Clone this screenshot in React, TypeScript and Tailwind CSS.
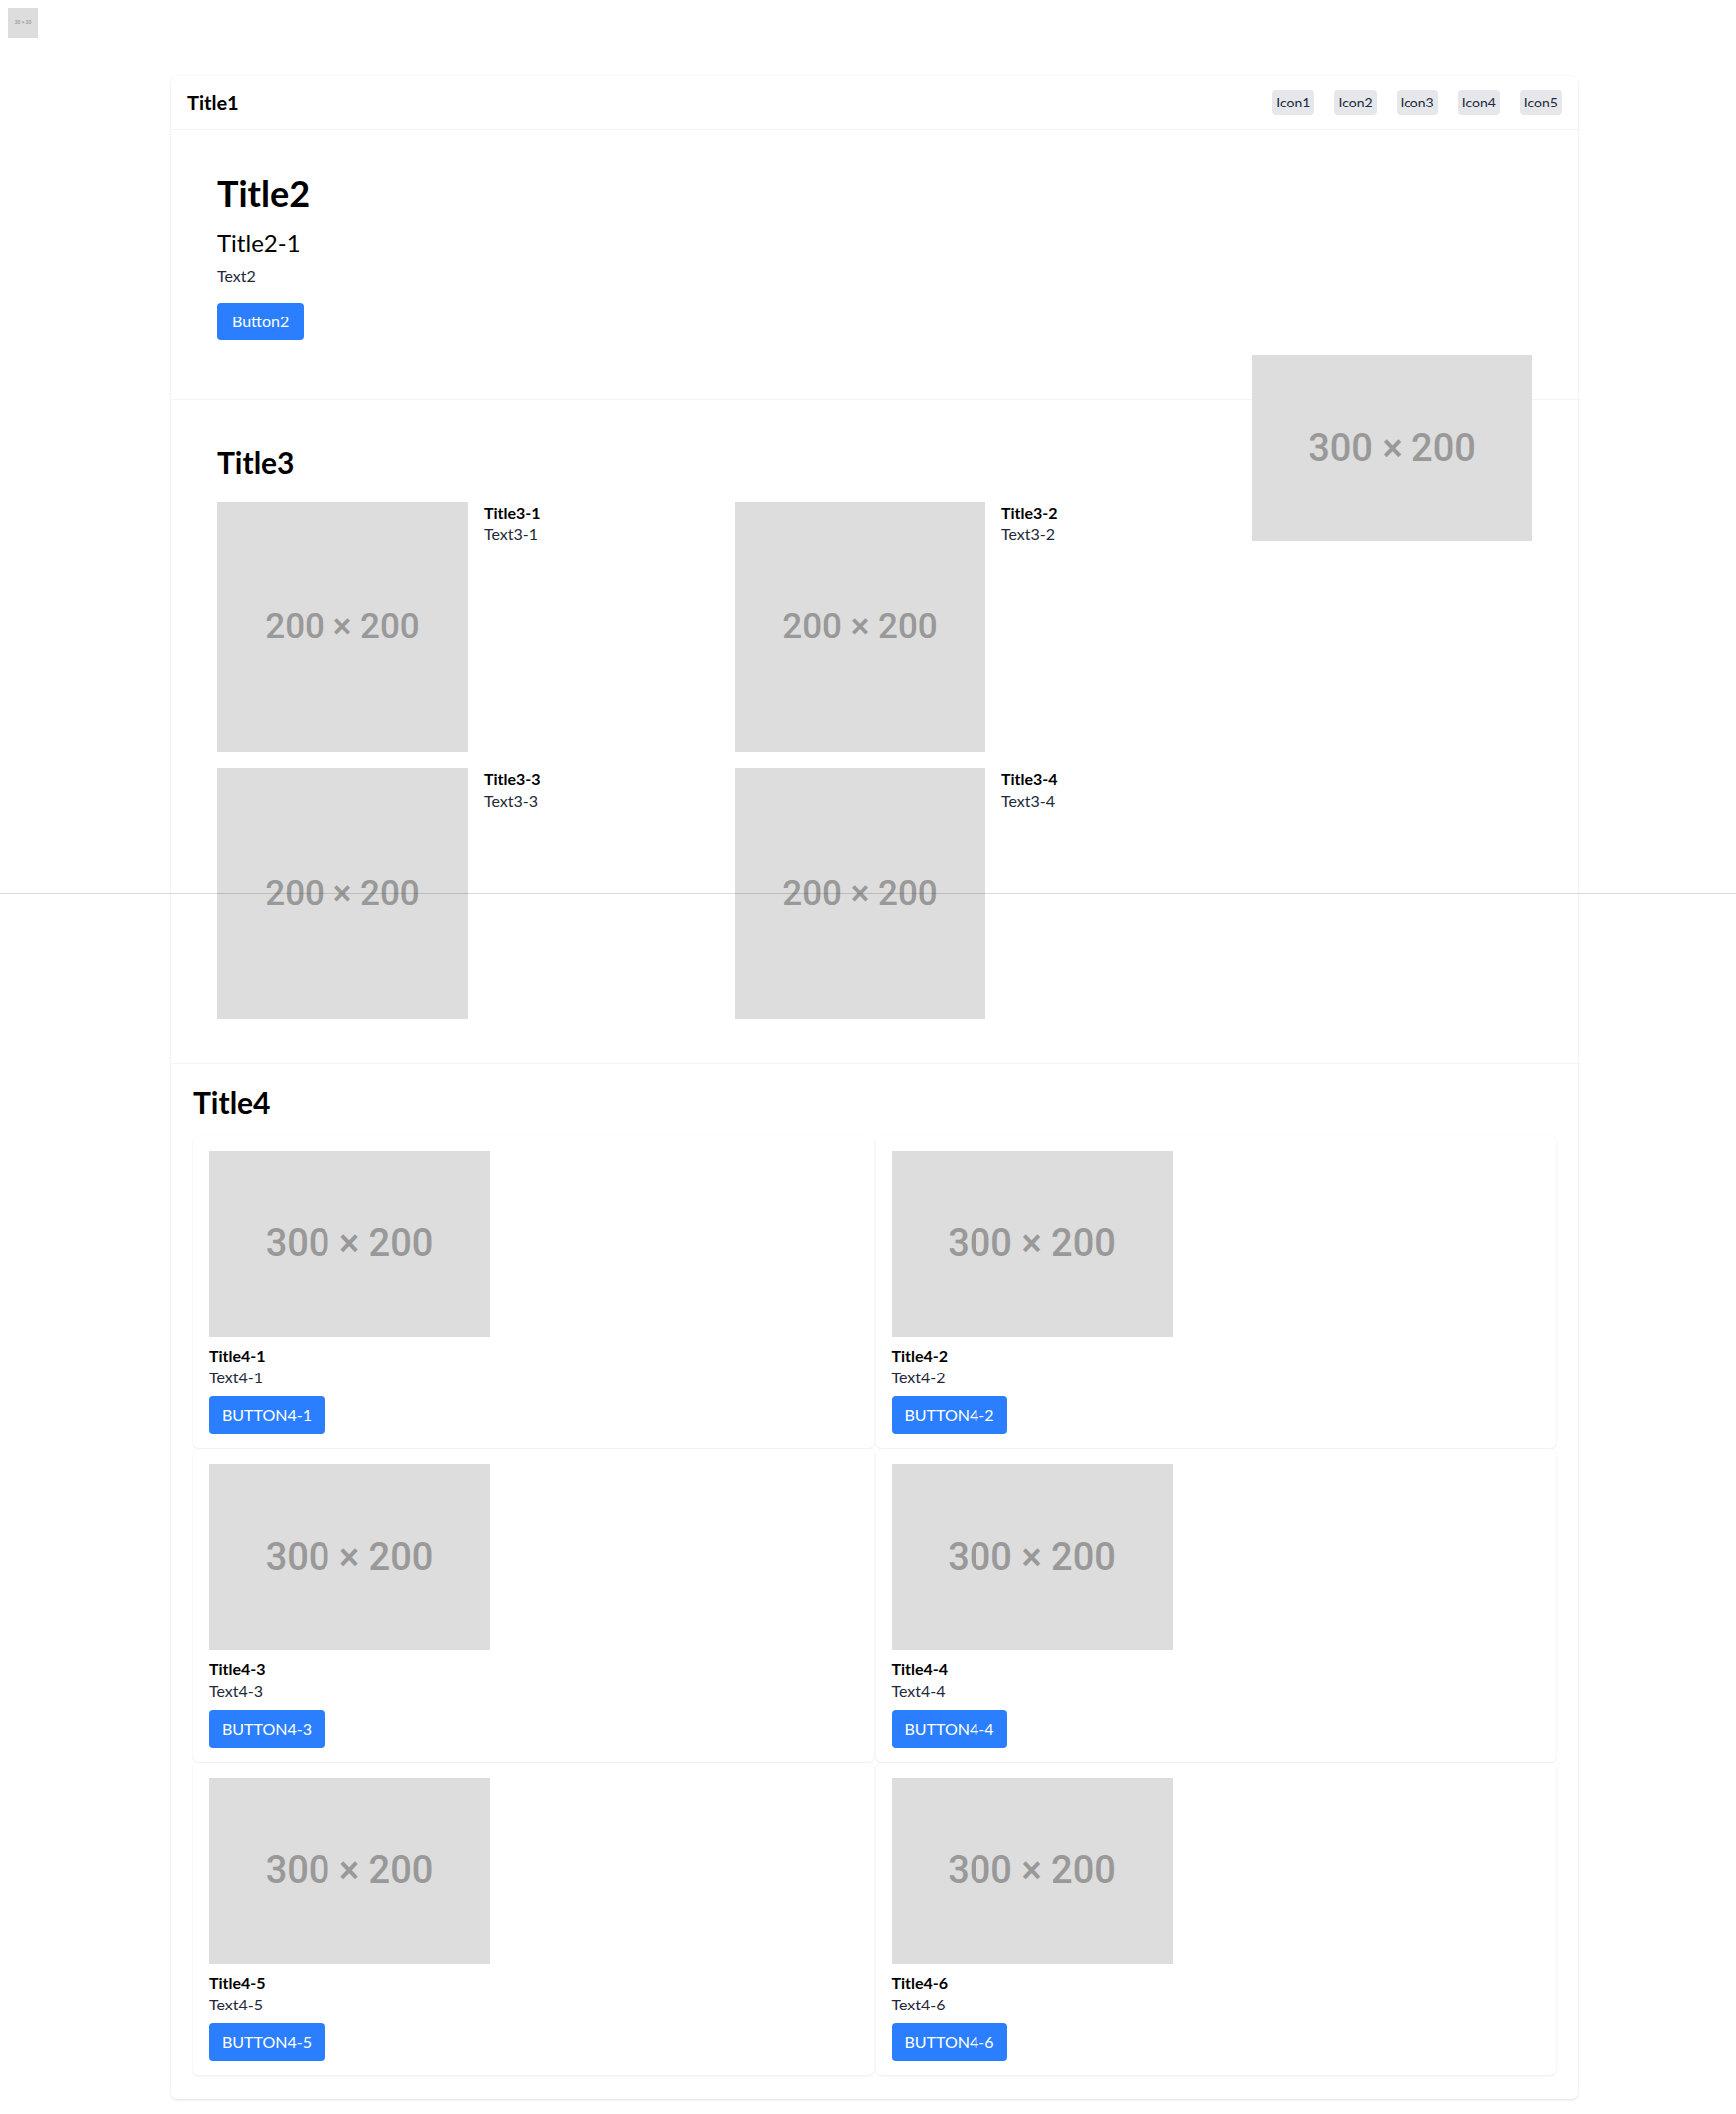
import React from 'react'

const icons = ['Icon1', 'Icon2', 'Icon3', 'Icon4', 'Icon5']
const features = ['3-1', '3-2', '3-3', '3-4']
const cards = ['4-1', '4-2', '4-3', '4-4', '4-5', '4-6']

function Placeholder({ className, label }: { className: string; label: string }) {
  return (
    <div
      className={`flex shrink-0 items-center justify-center bg-[#dddddd] font-['Roboto','Liberation_Sans',sans-serif] font-medium text-[#999999] ${className}`}
    >
      {label}
    </div>
  )
}

export default function App() {
  return (
    <div className="relative min-h-screen bg-white p-2 font-['Lato','Noto_Sans',sans-serif] text-black">
      <Placeholder className="h-[30px] w-[30px] text-[5px]" label="30 × 30" />

      <div className="mt-[38px] ml-[164px] w-[1413px] rounded-md bg-white shadow-sm">
        <header className="flex h-[55px] items-center justify-between border-b border-gray-100 px-4">
          <h1 className="text-xl font-bold">Title1</h1>
          <nav className="flex gap-[20px]">
            {icons.map((icon) => (
              <span
                key={icon}
                className="flex h-[26px] items-center rounded bg-gray-200 px-1 text-sm text-gray-800"
              >
                {icon}
              </span>
            ))}
          </nav>
        </header>

        <section className="flex justify-between border-b border-gray-100 px-[46px] pt-[43px] pb-[59px]">
          <div>
            <h2 className="text-4xl font-bold">Title2</h2>
            <p className="mt-[14px] text-2xl">Title2-1</p>
            <p className="mt-[5px] text-base text-gray-800">Text2</p>
            <button className="mt-[15px] h-[38px] rounded bg-blue-500 px-[15px] text-base text-white">
              Button2
            </button>
          </div>
          <Placeholder className="mt-[183px] -mb-[300px] h-[187px] w-[281px] text-[38px]" label="300 × 200" />
        </section>

        <section className="border-b border-gray-100 px-[46px] pt-[44px] pb-[44px]">
          <h2 className="text-3xl font-bold">Title3</h2>
          <div className="mt-[22px] grid grid-cols-[repeat(2,504px)] gap-4">
            {features.map((n) => (
              <div key={n} className="flex gap-4">
                <Placeholder className="h-[252px] w-[252px] text-[35px]" label="200 × 200" />
                <div>
                  <p className="font-bold leading-[22px]">Title{n}</p>
                  <p className="leading-[22px] text-gray-800">Text{n}</p>
                </div>
              </div>
            ))}
          </div>
        </section>

        <section className="px-[22px] pt-[20px] pb-6">
          <h2 className="text-3xl font-bold">Title4</h2>
          <div className="mt-4 grid grid-cols-2 gap-x-[2px] gap-y-px">
            {cards.map((n) => (
              <div
                key={n}
                className="rounded-md bg-white px-4 pt-[15px] pb-[14px] shadow-[0_1px_3px_rgba(0,0,0,0.08)]"
              >
                <Placeholder className="h-[187px] w-[282px] text-[38px]" label="300 × 200" />
                <p className="mt-2 font-bold leading-[22px]">Title{n}</p>
                <p className="leading-[22px] text-gray-800">Text{n}</p>
                <button className="mt-2 h-[38px] rounded bg-blue-500 px-[13px] text-base text-white">
                  BUTTON{n}
                </button>
              </div>
            ))}
          </div>
        </section>
      </div>

      <div className="pointer-events-none absolute top-[897px] right-0 left-0 z-10 h-px bg-black/15" />
    </div>
  )
}
